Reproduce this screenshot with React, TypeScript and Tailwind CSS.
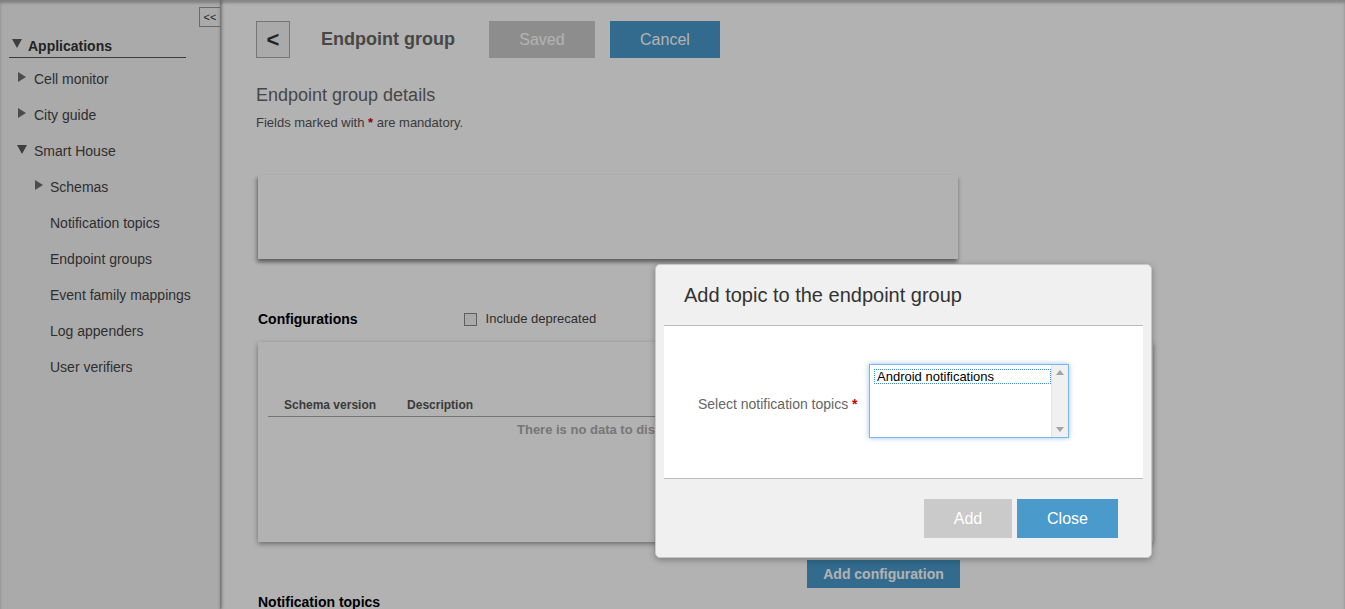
import React from "react";

const font = { fontFamily: '"Liberation Sans", Arial, sans-serif' };

function TriRight({ className = "" }: { className?: string }) {
  return (
    <svg width="8" height="10" viewBox="0 0 8 10" className={className}>
      <path d="M0 0 L8 5 L0 10 Z" fill="#6e6e6e" />
    </svg>
  );
}
function TriDown({ className = "" }: { className?: string }) {
  return (
    <svg width="10" height="9" viewBox="0 0 10 9" className={className}>
      <path d="M0 0 L10 0 L5 9 Z" fill="#5a5a5a" />
    </svg>
  );
}

function Sidebar() {
  const sub = ["Notification topics", "Endpoint groups", "Event family mappings", "Log appenders", "User verifiers"];
  return (
    <div className="relative z-10 w-[220px] shrink-0 h-full bg-[#f4f4f4] shadow-[2px_0_3px_rgba(0,0,0,0.3),inset_0_3px_3px_rgba(0,0,0,0.25)] text-[14px] text-[#444]">
      <div className="flex justify-end pt-[7px]">
        <div className="w-[21px] h-[20px] border border-[#999] border-r-0 flex items-center justify-center text-[11px] text-[#333] leading-none">&lt;&lt;</div>
      </div>
      <div className="ml-[9px] w-[177px] h-[31px] pt-[9px] border-b border-[#555] flex items-start">
        <TriDown className="ml-[3px] mt-[3px]" />
        <span className="ml-[6px] font-bold text-[#333]">Applications</span>
      </div>
      <div className="mt-[3px]">
        <div className="h-[36px] flex items-center pl-[18px]"><TriRight className="mt-[-4px]" /><span className="ml-[8px]">Cell monitor</span></div>
        <div className="h-[36px] flex items-center pl-[18px]"><TriRight className="mt-[-4px]" /><span className="ml-[8px]">City guide</span></div>
        <div className="h-[36px] flex items-center pl-[17px]"><TriDown className="mt-[-4px]" /><span className="ml-[7px]">Smart House</span></div>
        <div className="h-[36px] flex items-center pl-[35px]"><TriRight className="mt-[-4px]" /><span className="ml-[7px]">Schemas</span></div>
        {sub.map((s) => (
          <div key={s} className="h-[36px] flex items-center pl-[50px]">{s}</div>
        ))}
      </div>
    </div>
  );
}

function Main() {
  return (
    <div className="flex-1 h-full bg-white shadow-[inset_0_3px_3px_rgba(0,0,0,0.25)] pl-[36px] pt-[21px]">
      <div className="flex items-center h-[37px]">
        <div className="w-[34px] h-[37px] border border-[#aaa] bg-[#f4f4f4] flex items-center justify-center text-[22px] font-bold text-[#333]">&lt;</div>
        <div className="ml-[31px] text-[18px] font-bold text-[#666]">Endpoint group</div>
        <div className="ml-[34px] w-[106px] h-[37px] bg-[#cbcbcb] text-white text-[16px] flex items-center justify-center">Saved</div>
        <div className="ml-[15px] w-[110px] h-[37px] bg-[#4a9acc] text-white text-[16px] flex items-center justify-center">Cancel</div>
      </div>
      <div className="mt-[26px] text-[18px] text-[#666] leading-[22px]">Endpoint group details</div>
      <div className="mt-[9px] text-[13px] text-[#555] leading-[15px]">
        Fields marked with <span className="text-[#cc0000] font-bold">*</span> are mandatory.
      </div>
      <div className="mt-[45px] ml-[2px] w-[700px] h-[84px] bg-white shadow-[0_3px_4px_rgba(0,0,0,0.35),-2px_3px_4px_rgba(0,0,0,0.2)]" />
      <div className="mt-[50px] ml-[2px] flex items-center h-[20px]">
        <span className="text-[14px] font-bold text-black">Configurations</span>
        <div className="ml-[106px] w-[13px] h-[13px] border border-[#888] bg-[#f2f2f2]" />
        <span className="ml-[9px] text-[13px] text-[#444]">Include deprecated</span>
      </div>
      <div className="mt-[13px] ml-[2px] w-[895px] h-[200px] bg-white shadow-[0_2px_5px_rgba(0,0,0,0.4)] px-[10px] pt-[56px]">
        <div className="flex text-[12px] font-bold text-[#555] h-[19px] items-center border-b border-[#aaa] pb-[4px]">
          <span className="ml-[16px]">Schema version</span>
          <span className="ml-[31px]">Description</span>
        </div>
        <div className="ml-[249px] mt-[3px] text-[13px] font-bold text-[#aaa]">There is no data to display</div>
      </div>
      <div className="mt-[18px] ml-[551px] w-[153px] h-[28px] bg-[#4a9acc] text-white text-[14px] font-bold flex items-center justify-center">Add configuration</div>
      <div className="mt-[6px] ml-[2px] text-[14px] font-bold text-black leading-[16px]">Notification topics</div>
    </div>
  );
}

function Modal() {
  return (
    <div className="absolute left-[655px] top-[264px] w-[497px] h-[294px] z-30 bg-[#f0f0f0] border border-[#c8c8c8] rounded-[5px] shadow-[0_2px_6px_rgba(0,0,0,0.3)] text-[#333]">
      <div className="h-[60px] pl-[28px] flex items-center text-[20px] text-[#333]">Add topic to the endpoint group</div>
      <div className="mx-[8px] h-[154px] bg-white border-t border-b border-[#bbb] flex items-start pt-[38px]">
        <div className="ml-[34px] mt-[30px] text-[14px] text-[#666] w-[163px]">
          Select notification topics <span className="text-[#cc0000] font-bold">*</span>
        </div>
        <div className="ml-[8px] w-[200px] h-[74px] border border-[#7eb4ea] shadow-[0_0_5px_rgba(100,170,240,0.7)] flex">
          <div className="flex-1 pl-[4px] pt-[4px]">
            <div className="border border-dotted border-[#3a8ee6] text-[13px] text-black leading-[13px] pl-[2px] h-[15px]">Android notifications</div>
          </div>
          <div className="w-[17px] bg-[#f0f0f0] border-l border-[#e4e4e4] flex flex-col justify-between items-center py-[5px]">
            <svg width="8" height="5" viewBox="0 0 8 5"><path d="M0 5 L4 0 L8 5 Z" fill="#a3a3a3" /></svg>
            <svg width="8" height="5" viewBox="0 0 8 5"><path d="M0 0 L8 0 L4 5 Z" fill="#a3a3a3" /></svg>
          </div>
        </div>
      </div>
      <div className="flex justify-end pr-[33px] pt-[20px] gap-[5px]">
        <div className="w-[88px] h-[39px] bg-[#cacaca] text-white text-[16px] flex items-center justify-center">Add</div>
        <div className="w-[101px] h-[39px] bg-[#4a9acc] text-white text-[16px] flex items-center justify-center">Close</div>
      </div>
    </div>
  );
}

export default function App() {
  return (
    <div className="relative w-full h-[609px] overflow-hidden flex" style={font}>
      <Sidebar />
      <Main />
      <div className="absolute inset-0 z-20 bg-black/30" />
      <Modal />
    </div>
  );
}
